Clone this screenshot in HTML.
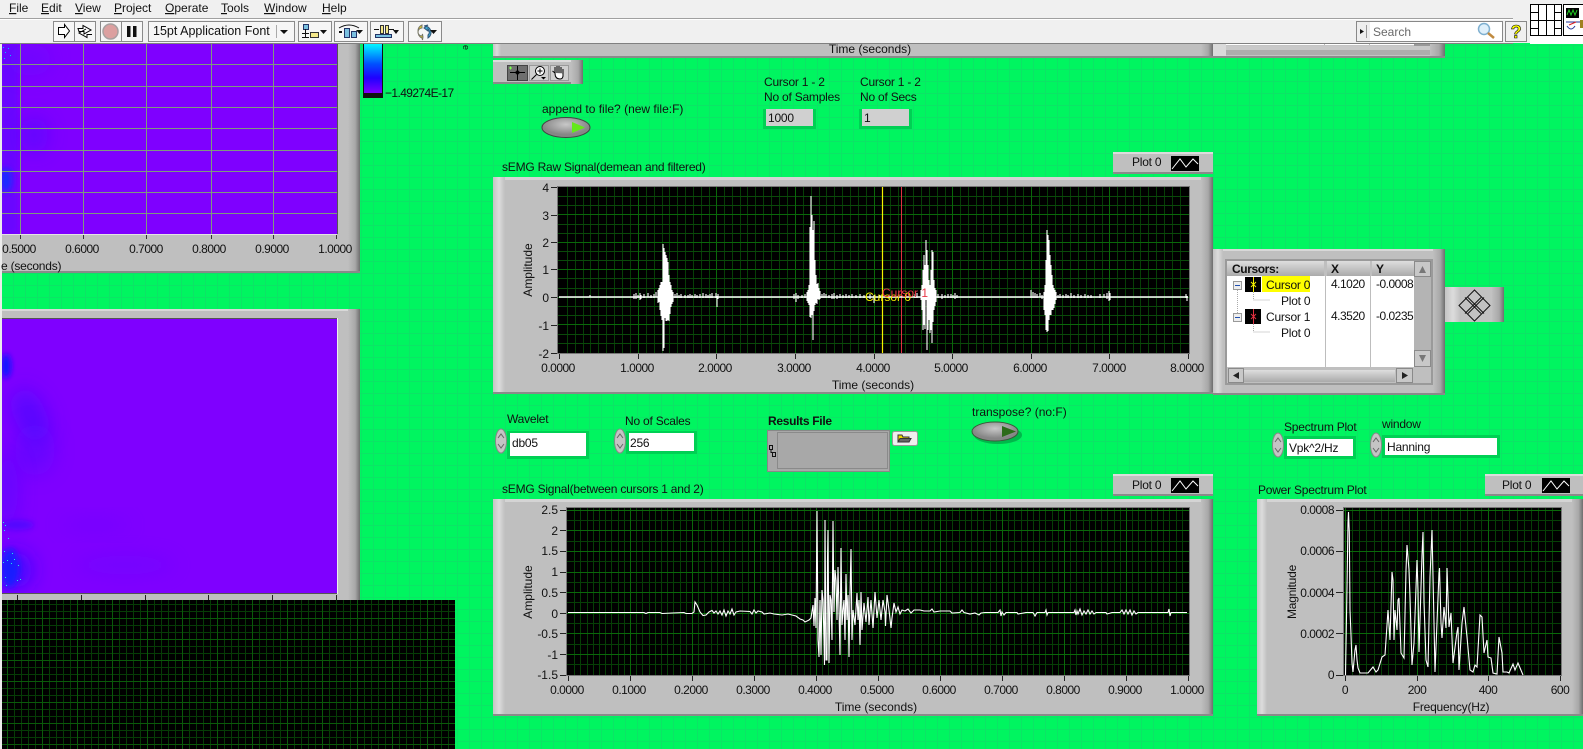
<!DOCTYPE html>
<html><head><meta charset="utf-8"><style>
html,body{margin:0;padding:0;width:1583px;height:749px;overflow:hidden;background:#00f560}
svg{display:block;font-family:"Liberation Sans",sans-serif;font-size:12px;letter-spacing:-.22px;fill:#111}
.m{text-anchor:middle}.e{text-anchor:end}
.n{letter-spacing:-.5px}.z{letter-spacing:0}
</style></head><body>
<svg width="1583" height="749" viewBox="0 0 1583 749" xmlns="http://www.w3.org/2000/svg">
<defs>
<pattern id="g" width="12" height="12" patternUnits="userSpaceOnUse" x="1" y="9"><rect width="12" height="12" fill="#00f560"/><path d="M0 .5H12M.5 0V12" stroke="#0ce466" stroke-width="1"/></pattern>
<pattern id="p4" width="35" height="21" patternUnits="userSpaceOnUse" x="7" y="597"><path d="M7.500 0V21M14.500 0V21M21.500 0V21M28.500 0V21M0 7.500H35M0 14.500H35" stroke="#063c06"/><path d="M.5 0V21M0 .5H35" stroke="#0a5a0a"/></pattern>
<path id="d1" d="M8.500 187V353M16.500 187V353M24.500 187V353M31.500 187V353M39.500 187V353M47.500 187V353M55.500 187V353M63.500 187V353M71.500 187V353" stroke="#063f06"/>
<path id="d2" d="M6.500 508V675M12.500 508V675M19.500 508V675M25.500 508V675M31.500 508V675M37.500 508V675M43.500 508V675M50.500 508V675M56.500 508V675" stroke="#063f06"/>
<path id="d3" d="M7.500 508V675M14.500 508V675M21.500 508V675M29.500 508V675M36.500 508V675M43.500 508V675M50.500 508V675M57.500 508V675M64.500 508V675" stroke="#063f06"/>
<linearGradient id="L"><stop offset="0" stop-color="#c4c4c4"/><stop offset=".5" stop-color="#dcdcdc"/><stop offset="1" stop-color="#bfbfbf"/></linearGradient>
<linearGradient id="R"><stop offset="0" stop-color="#bfbfbf"/><stop offset=".6" stop-color="#a8a8a8"/><stop offset="1" stop-color="#6e6e6e"/></linearGradient>
<linearGradient id="V" x2="0" y2="1"><stop offset="0" stop-color="#dedede"/><stop offset="1" stop-color="#aaa"/></linearGradient>
<linearGradient id="bar" x2="0" y2="1"><stop offset="0" stop-color="#00ffff"/><stop offset=".42" stop-color="#0050ff"/><stop offset=".7" stop-color="#2000ff"/><stop offset="1" stop-color="#7f00ff"/></linearGradient>
<radialGradient id="btn1" cx=".5" cy=".35"><stop offset="0" stop-color="#c8c8c8"/><stop offset="1" stop-color="#868686"/></radialGradient>
<filter id="b3" x="-100%" y="-100%" width="300%" height="300%"><feGaussianBlur stdDeviation="3"/></filter>
<filter id="b8" x="-100%" y="-100%" width="300%" height="300%"><feGaussianBlur stdDeviation="10"/></filter>
<clipPath id="c1"><rect x="2" y="43" width="335" height="191"/></clipPath>
<clipPath id="c2"><rect x="2" y="319" width="335" height="274"/></clipPath>
</defs>

<rect width="1583" height="749" fill="url(#g)"/>
<rect x="0" y="43" width="2" height="706" fill="#ececec"/>

<!-- upper heatmap panel -->
<rect x="2" y="43" width="358" height="230" fill="#bfbfbf"/>
<rect x="348" y="43" width="12" height="230" fill="url(#R)"/>
<rect x="2" y="271" width="358" height="2" fill="#8a8a8a"/>
<rect x="2" y="43" width="335" height="191" fill="#7f00ff"/>
<g clip-path="url(#c1)">
<rect x="0" y="43" width="18" height="191" fill="#3a18ff" opacity=".3" filter="url(#b3)"/>
<ellipse cx="34" cy="135" rx="14" ry="18" fill="#3a10ff" opacity=".45" filter="url(#b8)"/>
<ellipse cx="6" cy="180" rx="6" ry="12" fill="#1030ff" opacity=".85" filter="url(#b3)"/>
<ellipse cx="30" cy="60" rx="22" ry="16" fill="#5a08ff" opacity=".4" filter="url(#b8)"/>
<path d="M3 47h1v1H3zM5 52h1v1H5zM8 48h1v1H8zM4 58h1v1H4zM10 55h1v1h-1z" fill="#00c0ff"/>
</g>
<path d="M2 64.500H337M2 86.500H337M2 107.500H337M2 128.500H337M2 150.500H337M2 171.500H337M2 192.500H337M2 213.500H337M20.500 43V234M83.500 43V234M146.500 43V234M211.500 43V234M273.500 43V234" stroke="#7e9a7e" stroke-width="1"/>
<rect x="337" y="43" width="1" height="191" fill="#555"/>
<rect x="2" y="234" width="335" height="1" fill="#e4e4e4"/>
<path d="M20.500 235V239M83.500 235V239M146.500 235V239M211.500 235V239M273.500 235V239M336.500 235V239" stroke="#333"/>
<g class="m n"><text x="19" y="253">0.5000</text><text x="82" y="253">0.6000</text><text x="146" y="253">0.7000</text><text x="209" y="253">0.8000</text><text x="272" y="253">0.9000</text><text x="335" y="253">1.0000</text></g>
<text x="1" y="270">e (seconds)</text>

<!-- color bar -->
<rect x="363" y="43" width="20" height="55" fill="#111"/>
<rect x="364" y="43" width="18" height="50" fill="url(#bar)"/>
<text x="385" y="97" class="n" style="letter-spacing:-.6px">−1.49274E-17</text>
<text transform="translate(463,45) rotate(90)" font-size="9">e</text>

<!-- lower heatmap panel -->
<rect x="2" y="309" width="358" height="291" fill="#bfbfbf"/>
<rect x="2" y="309" width="358" height="2" fill="#d8d8d8"/>
<rect x="348" y="309" width="12" height="291" fill="url(#R)"/>
<rect x="2" y="318" width="336" height="276" fill="#555"/>
<rect x="2" y="319" width="335" height="274" fill="#7f00ff"/>
<g clip-path="url(#c2)">
<ellipse cx="6" cy="366" rx="5" ry="12" fill="#1018ff" filter="url(#b3)"/>
<ellipse cx="30" cy="415" rx="16" ry="28" fill="#3a10ff" opacity=".55" filter="url(#b8)" transform="rotate(-25 30 415)"/>
<ellipse cx="35" cy="450" rx="20" ry="26" fill="#4a0cff" opacity=".4" filter="url(#b8)"/>
<ellipse cx="8" cy="490" rx="10" ry="40" fill="#3a10ff" opacity=".4" filter="url(#b8)"/>
<ellipse cx="14" cy="570" rx="18" ry="18" fill="#2210ff" opacity=".7" filter="url(#b8)"/>
<ellipse cx="10" cy="568" rx="9" ry="20" fill="#1020ff" opacity=".8" filter="url(#b3)"/>
<ellipse cx="18" cy="525" rx="16" ry="5" fill="#3a10ff" opacity=".6" filter="url(#b3)"/>
<ellipse cx="125" cy="565" rx="50" ry="10" fill="#5a08ff" opacity=".3" filter="url(#b8)"/>
<ellipse cx="95" cy="525" rx="36" ry="6" fill="#5a08ff" opacity=".3" filter="url(#b8)"/>
<path d="M3 522h1v1H3zM5 525h1v1H5zM4 530h1v1H4zM8 538h1v1H8zM4 551h1v1H4zM12 553h1v1h-1zM7 560h1v1H7zM14 559h1v1h-1zM3 562h1v1H3zM11 563h1v1h-1zM18 565h1v1h-1zM5 577h1v1H5zM17 580h1v1h-1zM6 585h1v1H6zM20 579h1v1h-1z" fill="#20e8e0"/>
</g>
<rect x="337" y="318" width="1" height="276" fill="#eee"/>
<path d="M17.500 595V600M81.500 595V600M145.500 595V600M208.500 595V600M272.500 595V600M336.500 595V600" stroke="#222"/>

<!-- bottom-left black plot -->
<rect x="2" y="600" width="453" height="149" fill="#000"/>
<rect x="2" y="600" width="453" height="149" fill="url(#p4)"/>

<!-- top panels -->
<rect x="493" y="43" width="720" height="15" fill="#bfbfbf"/>
<rect x="1201" y="43" width="12" height="15" fill="url(#R)"/>
<rect x="493" y="43" width="8" height="15" fill="url(#L)"/>
<rect x="493" y="56" width="720" height="2" fill="#8a8a8a"/>
<text class="m z" x="870" y="53">Time (seconds)</text>
<rect x="1213" y="43" width="232" height="15" fill="#c4c4c4"/>
<rect x="1213" y="43" width="13" height="15" fill="#dadada"/>
<rect x="1226" y="43" width="188" height="2" fill="#fff"/>
<path d="M1324.500 43V45M1369.500 43V45" stroke="#bbb"/>
<rect x="1414" y="43" width="17" height="3" fill="#999"/>
<rect x="1226" y="46" width="207" height="4" fill="#c9c9c9"/>
<rect x="1226" y="50" width="207" height="5" fill="#adadad"/>
<rect x="1430" y="43" width="15" height="15" fill="url(#R)"/>
<rect x="1213" y="56" width="232" height="2" fill="#8a8a8a"/>

<!-- palette -->
<rect x="493" y="60" width="90" height="24" fill="#bfbfbf"/>
<rect x="493" y="60" width="90" height="2" fill="#dcdcdc"/><rect x="493" y="82" width="90" height="2" fill="#8a8a8a"/>
<rect x="571" y="60" width="12" height="24" fill="url(#R)"/>
<rect x="507.500" y="65.500" width="20" height="15" fill="#6f6f6f" stroke="#444"/>
<path d="M510 72.500H525M517.500 66V80" stroke="#000"/><circle cx="517.500" cy="72.500" r="1.500" fill="none" stroke="#000"/><path d="M509 68h3M510.500 66.500v3" stroke="#7cff50"/>
<rect x="529.500" y="65.500" width="19" height="15" fill="#cfcfcf" stroke="#9a9a9a"/>
<circle cx="540" cy="71" r="4.500" fill="#fff" stroke="#000"/><path d="M536.500 74.500L531.500 79.500M537.500 71h5M540 68.500v5" stroke="#000"/><path d="M541 77h5l-2.500 2.500z" fill="#000"/>
<rect x="550.500" y="65.500" width="18" height="15" fill="#cfcfcf" stroke="#9a9a9a"/>
<path d="M555 73V67M557 73V66M559 73V66M561 73V67M563 74V69M555 73L552.500 71M555 73q0 6 5 6q3.500 0 3-5" fill="#fff" stroke="#000"/>

<!-- labels -->
<text x="542" y="113" class="z">append to file? (new file:F)</text>
<ellipse cx="566" cy="127.500" rx="24" ry="10" fill="url(#btn1)" stroke="#444"/>
<path d="M572 122L585 127.500L572 133Z" fill="#64e81a"/>
<text x="764" y="86">Cursor 1 - 2</text><text x="764" y="101">No of Samples</text>
<text x="860" y="86">Cursor 1 - 2</text><text x="860" y="101">No of Secs</text>
<rect x="763" y="109" width="53" height="20" fill="#00d054"/><rect x="766" y="109" width="47" height="17" fill="#d0d0d0"/><text x="768" y="122">1000</text>
<rect x="859" y="109" width="53" height="20" fill="#00d054"/><rect x="862" y="109" width="47" height="17" fill="#d0d0d0"/><text x="864" y="122">1</text>
<text x="502" y="171">sEMG Raw Signal(demean and filtered)</text>

<!-- legends -->
<g><rect x="1113" y="152" width="100" height="22" fill="#bfbfbf"/><rect x="1113" y="152" width="100" height="2" fill="#dcdcdc"/><rect x="1113" y="172" width="100" height="2" fill="#8a8a8a"/><rect x="1171" y="156" width="28" height="15" fill="#000"/><path d="M1172 169L1180 159L1186 167L1193 159L1198 164" fill="none" stroke="#fff"/><text x="1132" y="166">Plot 0</text></g>
<g><rect x="1113" y="474" width="100" height="22" fill="#bfbfbf"/><rect x="1113" y="474" width="100" height="2" fill="#dcdcdc"/><rect x="1113" y="494" width="100" height="2" fill="#8a8a8a"/><rect x="1171" y="478" width="28" height="15" fill="#000"/><path d="M1172 491L1180 481L1186 489L1193 481L1198 486" fill="none" stroke="#fff"/><text x="1132" y="489">Plot 0</text></g>
<g><rect x="1485" y="474" width="98" height="22" fill="#bfbfbf"/><rect x="1485" y="474" width="98" height="2" fill="#dcdcdc"/><rect x="1485" y="494" width="98" height="2" fill="#8a8a8a"/><rect x="1542" y="478" width="28" height="15" fill="#000"/><path d="M1543 491L1551 481L1557 489L1564 481L1569 486" fill="none" stroke="#fff"/><text x="1502" y="489">Plot 0</text></g>

<!-- RAW panel -->
<rect x="493" y="177" width="720" height="217" fill="#bfbfbf"/>
<rect x="493" y="177" width="720" height="3" fill="#d4d4d4"/>
<rect x="493" y="177" width="12" height="217" fill="url(#L)"/>
<rect x="1201" y="177" width="12" height="217" fill="url(#R)"/>
<rect x="493" y="392" width="720" height="2" fill="#8a8a8a"/>
<rect x="557" y="186" width="633" height="168" fill="#777"/>
<rect x="558" y="187" width="631" height="166" fill="#000"/>
<use href="#d1" x="559"/><use href="#d1" x="638"/><use href="#d1" x="716"/><use href="#d1" x="795"/><use href="#d1" x="874"/><use href="#d1" x="952"/><use href="#d1" x="1031"/><use href="#d1" x="1109"/>
<path d="M558 196.500H1189M558 205.500H1189M558 224.500H1189M558 233.500H1189M558 251.500H1189M558 260.500H1189M558 278.500H1189M558 288.500H1189M558 306.500H1189M558 315.500H1189M558 334.500H1189M558 343.500H1189" stroke="#0a4a0a"/>
<path d="M558 214.500H1189M558 242.500H1189M558 269.500H1189M558 297.500H1189M558 324.500H1189M638.500 187V353M716.500 187V353M795.500 187V353M874.500 187V353M952.500 187V353M1031.500 187V353M1109.500 187V353" stroke="#0a680a"/>
<path d="M882.500 187V353" stroke="#f4f000" stroke-width="1.200"/><path d="M901.500 187V353" stroke="#e03040"/>
<path d="M559 297H1188" stroke="#fff" stroke-width="1.400"/>
<path stroke="#fff" stroke-width="1.100" fill="none" d="M590 295v2M634 294v5M636 293v6M638 295v3M640 293v7M641 295v4M644 294v4M648 293v4M651 295v3M654 294v4M656 292v5M658 290v13M659 288v14M660 285v25M661 282v34M662 282v38M663 244v107M664 248v100M665 252v66M666 255v66M667 258v63M668 262v58M669 275v46M670 282v32M671 285v22M672 290v14M673 292v10M675 294v4M677 293v5M679 295v3M681 294v4M685 295v3M688 295v3M690 294v4M692 295v3M695 294v4M697 295v3M700 294v4M703 293v5M706 294v4M708 295v3M710 294v4M712 293v5M716 293v5M717 296v11M718 294v5M794 294v5M796 293v9M798 295v4M802 295v3M805 294v4M807 292v9M808 290v13M809 285v20M810 227v90M811 196v122M812 215v100M813 230v110M814 221v90M815 260v45M816 275v28M817 284v20M818 283v16M819 288v12M820 291v8M822 294v4M824 293v5M826 294v4M829 295v3M832 294v5M834 293v6M837 295v4M840 294v4M843 295v3M846 294v4M849 295v3M852 294v4M856 295v3M860 294v4M864 295v3M870 294v5M874 295v8M880 295v3M915 294v4M917 293v5M921 290v10M922 285v25M923 270v60M924 255v70M925 265v64M926 240v60M927 250v100M928 265v65M929 280v40M930 285v48M931 270v60M932 250v93M933 252v70M934 280v30M935 288v18M936 290v12M938 294v4M942 294v5M945 295v3M948 294v4M951 294v4M953 295v3M955 293v6M957 295v3M1031 290v8M1033 292v6M1035 293v5M1037 294v4M1040 293v4M1042 295v4M1044 292v18M1045 285v30M1046 260v70M1047 230v102M1048 235v96M1049 240v80M1050 255v60M1051 265v50M1052 275v35M1053 285v25M1054 288v20M1055 290v14M1056 292v8M1058 295v3M1060 294v4M1063 295v3M1066 294v4M1068 295v3M1071 293v5M1074 295v3M1078 294v4M1081 295v3M1085 294v4M1088 295v3M1091 295v3M1100 294v4M1104 294v3M1107 293v6M1109 291v10M1110 293v7M1186 294v4M1187 296v5"/>
<text x="865" y="301" class="z" style="fill:#f4f000">Cursor 0</text>
<text x="882" y="297" class="z" style="fill:#e83848">Cursor 1</text>
<path d="M551 187.500H557M551 215.500H557M551 242.500H557M551 269.500H557M551 297.500H557M551 325.500H557M551 353.500H557M559.500 354V359M638.500 354V359M716.500 354V359M795.500 354V359M874.500 354V359M952.500 354V359M1031.500 354V359M1109.500 354V359M1188.500 354V359" stroke="#222"/>
<g class="e z" font-size="12"><text x="549" y="192">4</text><text x="549" y="220">3</text><text x="549" y="247">2</text><text x="549" y="274">1</text><text x="549" y="302">0</text><text x="549" y="330">-1</text><text x="549" y="358">-2</text></g>
<g class="m n"><text x="558" y="372">0.0000</text><text x="637" y="372">1.0000</text><text x="715" y="372">2.0000</text><text x="794" y="372">3.0000</text><text x="873" y="372">4.0000</text><text x="951" y="372">5.0000</text><text x="1030" y="372">6.0000</text><text x="1109" y="372">7.0000</text><text x="1187" y="372">8.0000</text></g>
<text class="m z" x="873" y="389">Time (seconds)</text>
<text class="m z" transform="translate(532,270) rotate(-90)">Amplitude</text>

<!-- Cursor panel -->
<rect x="1213" y="249" width="232" height="146" fill="#bfbfbf"/>
<rect x="1213" y="249" width="232" height="2" fill="#d8d8d8"/>
<rect x="1213" y="249" width="10" height="146" fill="url(#L)"/>
<rect x="1433" y="249" width="12" height="146" fill="url(#R)"/>
<rect x="1213" y="393" width="232" height="2" fill="#8a8a8a"/>
<rect x="1225" y="259" width="208" height="126" fill="#9a9a9a"/>
<rect x="1227" y="261" width="204" height="122" fill="#bfbfbf"/>
<rect x="1227" y="261" width="97" height="15" fill="url(#V)"/><rect x="1327" y="261" width="43" height="15" fill="url(#V)"/><rect x="1372" y="261" width="42" height="15" fill="url(#V)"/>
<text x="1232" y="273" font-weight="bold" style="letter-spacing:-.4px">Cursors:</text><text x="1331" y="273" font-weight="bold">X</text><text x="1376" y="273" font-weight="bold">Y</text>
<rect x="1227" y="276" width="187" height="91" fill="#fff"/>
<path d="M1325.500 276V367M1370.500 276V367" stroke="#bdbdbd"/>
<rect x="1262" y="276" width="48" height="16" fill="#ff0"/>
<rect x="1245" y="277" width="16" height="15" fill="#000"/><path d="M1253.500 277V292" stroke="#f4f000"/><path d="M1251 282L1256 287M1256 282L1251 287" stroke="#f4f000"/>
<rect x="1245" y="309" width="16" height="15" fill="#000"/><path d="M1253.500 309V324" stroke="#e03040"/><path d="M1251 314L1256 319M1256 314L1251 319" stroke="#e03040"/>
<rect x="1233.500" y="281.500" width="8" height="8" fill="#eee" stroke="#999"/><path d="M1235 285.500H1240" stroke="#2050b0"/>
<rect x="1233.500" y="313.500" width="8" height="8" fill="#eee" stroke="#999"/><path d="M1235 317.500H1240" stroke="#2050b0"/>
<path d="M1237.500 290V313M1253.500 292V300H1270M1253.500 324V332H1270" stroke="#aaa" stroke-dasharray="1 1" fill="none"/>
<text x="1266" y="289">Cursor 0</text><text x="1281" y="305">Plot 0</text><text x="1266" y="321">Cursor 1</text><text x="1281" y="337">Plot 0</text>
<g class="n"><text x="1331" y="288">4.1020</text><text x="1376" y="288">-0.0008</text><text x="1331" y="320">4.3520</text><text x="1376" y="320">-0.0235</text></g>
<rect x="1414" y="261" width="17" height="106" fill="#b4b4b4"/>
<rect x="1414.500" y="261.500" width="16" height="15" fill="#c8c8c8" stroke="#8a8a8a"/><path d="M1419 273L1422.500 266L1426 273Z" fill="#777"/>
<rect x="1414.500" y="350.500" width="16" height="16" fill="#c8c8c8" stroke="#8a8a8a"/><path d="M1419 355L1422.500 362L1426 355Z" fill="#777"/>
<rect x="1227" y="367" width="187" height="16" fill="#bfbfbf"/>
<rect x="1244" y="370" width="151" height="12" fill="url(#V)"/>
<rect x="1228.500" y="368.500" width="15" height="14" fill="#c8c8c8" stroke="#8a8a8a"/><path d="M1239 372L1233 375.500L1239 379Z" fill="#222"/>
<rect x="1396.500" y="368.500" width="16" height="14" fill="#c8c8c8" stroke="#8a8a8a"/><path d="M1402 372L1408 375.500L1402 379Z" fill="#222"/>

<!-- diamond -->
<rect x="1445" y="287" width="59" height="35" fill="#c2c2c2"/>
<rect x="1445" y="287" width="16" height="35" fill="url(#L)"/>
<rect x="1492" y="287" width="12" height="35" fill="url(#R)"/>
<path d="M1474.500 290L1490 305.500L1474.500 321L1459 305.500ZM1465 297.500L1481 313.500M1468 297.500L1484 313.500M1484 297.500L1468 313.500M1481 297.500L1465 313.500" fill="none" stroke="#111"/>

<!-- controls row -->
<text x="507" y="423">Wavelet</text>
<ellipse cx="501" cy="441" rx="5.500" ry="12" fill="#c4c4c4" stroke="#888"/><path d="M498 438L501 434L504 438M498 444L501 448L504 444" fill="none" stroke="#666"/>
<rect x="507" y="431" width="82" height="28" fill="#00d054"/><rect x="510" y="433" width="76" height="23" fill="#fff"/><text x="512" y="447">db05</text>
<text x="625" y="425">No of Scales</text>
<ellipse cx="620" cy="441" rx="5.500" ry="12" fill="#c4c4c4" stroke="#888"/><path d="M617 438L620 434L623 438M617 444L620 448L623 444" fill="none" stroke="#666"/>
<rect x="626" y="431" width="71" height="23" fill="#00d054"/><rect x="629" y="433" width="65" height="18" fill="#fff"/><text x="630" y="447">256</text>
<text x="768" y="425" font-weight="bold" style="letter-spacing:-.3px">Results File</text>
<rect x="767.500" y="430.500" width="122" height="41" fill="#a8a8a8" stroke="#888"/>
<rect x="777.500" y="432.500" width="110" height="36" fill="#a8a8a8" stroke="#8a8a8a"/>
<path d="M769.500 445.500h3v4h-3zM772.500 452.500h3v4h-3zM771 449.500v3h3" fill="none" stroke="#111"/>
<rect x="892.500" y="431.500" width="25" height="14" rx="2" fill="#eee" stroke="#999"/>
<path d="M898 442V435H902L903 437H909V442Z" fill="#e8d800" stroke="#333"/><path d="M898 442L900 438.500H911L909 442Z" fill="#666" stroke="#333"/>
<text x="972" y="416" class="z">transpose? (no:F)</text>
<ellipse cx="998" cy="435" rx="24" ry="9" fill="#00b84a"/>
<ellipse cx="995" cy="431.500" rx="23" ry="9.500" fill="url(#btn1)" stroke="#3a5a3a"/>
<path d="M1002 426L1016 431.500L1002 437Z" fill="#2c6b1a"/>
<text x="1284" y="431">Spectrum Plot</text>
<ellipse cx="1278" cy="445" rx="5.500" ry="12" fill="#c4c4c4" stroke="#888"/><path d="M1275 442L1278 438L1281 442M1275 448L1278 452L1281 448" fill="none" stroke="#666"/>
<rect x="1284" y="436" width="72" height="23" fill="#00d054"/><rect x="1287" y="439" width="66" height="17" fill="#fff"/><text x="1289" y="452">Vpk^2/Hz</text>
<text x="1382" y="428">window</text>
<ellipse cx="1376" cy="445" rx="5.500" ry="12" fill="#c4c4c4" stroke="#888"/><path d="M1373 442L1376 438L1379 442M1373 448L1376 452L1379 448" fill="none" stroke="#666"/>
<rect x="1382" y="435" width="118" height="23" fill="#00d054"/><rect x="1385" y="438" width="112" height="17" fill="#fff"/><text x="1387" y="451">Hanning</text>
<text x="502" y="493">sEMG Signal(between cursors 1 and 2)</text>
<text x="1258" y="494">Power Spectrum Plot</text>

<!-- signal panel -->
<rect x="493" y="499" width="720" height="217" fill="#bfbfbf"/>
<rect x="493" y="499" width="720" height="3" fill="#d4d4d4"/>
<rect x="493" y="499" width="12" height="217" fill="url(#L)"/>
<rect x="1201" y="499" width="12" height="217" fill="url(#R)"/>
<rect x="493" y="714" width="720" height="2" fill="#8a8a8a"/>
<rect x="566" y="507" width="624" height="169" fill="#777"/>
<rect x="567" y="508" width="622" height="167" fill="#000"/>
<use href="#d2" x="568"/><use href="#d2" x="630"/><use href="#d2" x="692"/><use href="#d2" x="754"/><use href="#d2" x="816"/><use href="#d2" x="878"/><use href="#d2" x="940"/><use href="#d2" x="1002"/><use href="#d2" x="1064"/><use href="#d2" x="1126"/>
<path d="M567 520.500H1189M567 541.500H1189M567 561.500H1189M567 582.500H1189M567 602.500H1189M567 623.500H1189M567 644.500H1189M567 664.500H1189" stroke="#063f06"/>
<path d="M567 510.500H1189M567 530.500H1189M567 551.500H1189M567 572.500H1189M567 592.500H1189M567 613.500H1189M567 633.500H1189M567 654.500H1189M630.500 508V675M692.500 508V675M754.500 508V675M816.500 508V675M878.500 508V675M940.500 508V675M1002.500 508V675M1064.500 508V675M1126.500 508V675" stroke="#0a680a"/>
<polyline fill="none" stroke="#fff" stroke-width="1.100" points="568,612.500 644,612.500 646,613.500 648,612.500 660,612.500 662,613.500 672,613 684,612.500 686,613.500 692,613.500 694,612 695,602 697,605 700,612 703,615.500 706,615 709,612 712,610.500 714,613 716,611 718,614 720,611 722,615 724,610 726,616 728,611 730,614 732,609 734,615 736,612 740,611 750,611.500 752,614 754,610 756,613 758,611 762,612 764,614 770,613 774,614 782,615 788,614 792,615 796,616 800,619 803,620 805,622 807,621 809,620 811,618 813,605 814,626 815,598 816,628 816.500,570 817,511 818,640 819,657 820,600 821,655 822,590 823,600 824,640 824.500,665 825,520 826,660 827,660 827.500,560 828,530 829,663 830,595 831,600 832,640 833,521 834,612 835,570 836,580 837,620 838,567 839,610 840,655 841,548 842,625 843,610 844,600 845,640 846,574 847,620 848,595 849,657 850,594 851,549 852,640 853,610 855,625 857,593 858,620 859,600 860,645 861,592 862,630 864,603 866,622 868,597 869,625 871,600 873,628 875,592 877,618 879,600 881,620 883,600 885,612 885.500,626 887,595 889,610 891,628 892,618 894,603 896,612 898,607 900,614 902,610 905,611 908,609 911,613 914,610 920,610 924,611 930,611 932,609 934,612 940,611 950,611 952,613 960,612.500 962,610 964,612.500 970,614 975,613 979,615 981,613 985,612.500 998,612.500 1000,610 1001,616 1002,612 1004,615 1006,612.500 1017,612.500 1018,614 1026,612.500 1033,612.500 1035,616 1037,612.500 1045,612.500 1046,610 1047,615 1048,612.500 1074,612.500 1075,610 1076,615 1077,611 1078,614 1080,609 1082,615 1084,611 1086,614 1088,610 1090,614 1092,611 1094,614 1096,612.500 1106,612.500 1107,614 1112,612.500 1120,612.500 1122,610 1124,614 1126,610 1128,614 1130,610 1132,615 1134,611 1136,614 1138,612.500 1168,612.500 1169,609 1170,616 1171,612.500 1187,612.500"/>
<path d="M560 510.500H566M560 530.500H566M560 551.500H566M560 572.500H566M560 592.500H566M560 613.500H566M560 633.500H566M560 654.500H566M560 675.500H566M568.500 676V681M630.500 676V681M692.500 676V681M754.500 676V681M816.500 676V681M878.500 676V681M940.500 676V681M1002.500 676V681M1064.500 676V681M1126.500 676V681M1188.500 676V681" stroke="#222"/>
<g class="e z"><text x="558" y="514">2.5</text><text x="558" y="535">2</text><text x="558" y="555">1.5</text><text x="558" y="576">1</text><text x="558" y="597">0.5</text><text x="558" y="618">0</text><text x="558" y="638">-0.5</text><text x="558" y="659">-1</text><text x="558" y="679">-1.5</text></g>
<g class="m n"><text x="567" y="694">0.0000</text><text x="629" y="694">0.1000</text><text x="691" y="694">0.2000</text><text x="753" y="694">0.3000</text><text x="815" y="694">0.4000</text><text x="877" y="694">0.5000</text><text x="939" y="694">0.6000</text><text x="1001" y="694">0.7000</text><text x="1063" y="694">0.8000</text><text x="1125" y="694">0.9000</text><text x="1187" y="694">1.0000</text></g>
<text class="m z" x="876" y="711">Time (seconds)</text>
<text class="m z" transform="translate(532,592) rotate(-90)">Amplitude</text>

<!-- spectrum panel -->
<rect x="1257" y="499" width="326" height="217" fill="#bfbfbf"/>
<rect x="1257" y="499" width="326" height="3" fill="#d4d4d4"/>
<rect x="1257" y="499" width="10" height="217" fill="url(#L)"/>
<rect x="1572" y="499" width="11" height="217" fill="url(#R)"/>
<rect x="1257" y="714" width="326" height="2" fill="#8a8a8a"/>
<rect x="1343" y="507" width="219" height="169" fill="#777"/>
<rect x="1344" y="508" width="217" height="167" fill="#000"/>
<use href="#d3" x="1345"/><use href="#d3" x="1417"/><use href="#d3" x="1488"/>
<path d="M1344 520.500H1561M1344 530.500H1561M1344 541.500H1561M1344 561.500H1561M1344 571.500H1561M1344 582.500H1561M1344 602.500H1561M1344 612.500H1561M1344 623.500H1561M1344 643.500H1561M1344 654.500H1561M1344 664.500H1561" stroke="#063f06"/>
<path d="M1344 510.500H1561M1344 551.500H1561M1344 592.500H1561M1344 633.500H1561M1345.500 508V675M1417.500 508V675M1488.500 508V675" stroke="#0a680a"/>
<polyline fill="none" stroke="#fff" stroke-width="1.100" points="1345.500,675 1347,587 1348,523 1348.500,512 1349.300,532 1350,610 1351,635 1352,663 1353,672 1355,650 1356,645 1357,660 1358,668 1360,673 1368,673 1373,667 1376,672 1378,670 1382,657 1385,655 1387,625 1388,610 1390,640 1392,572 1393,580 1394,640 1395,610 1397,630 1398,600 1399,598 1401,653 1404,658 1406,570 1407,545 1409,570 1410,597 1412,665 1414,643 1417,560 1418,590 1419,652 1422,555 1423,532 1424,602 1426,660 1428,667 1430,577 1432,530 1434,623 1435,672 1439,573 1439.500,568 1441,623 1442,638 1444,607 1446,628 1447,568 1449,627 1451,613 1453,663 1457,632 1458,627 1459,670 1462,623 1464,607 1467,637 1470,670 1473,672 1475,665 1477,667 1480,615 1482,617 1484,653 1487,640 1488,657 1491,658 1493,673 1497,674 1499,637 1502,653 1503,672 1507,672 1509,673 1513,664 1515,670 1518,663 1523,675"/>
<path d="M1336 510.500H1343M1336 551.500H1343M1336 592.500H1343M1336 633.500H1343M1336 675.500H1343M1345.500 676V681M1417.500 676V681M1488.500 676V681M1560.500 676V681" stroke="#222"/>
<g class="e n"><text x="1334" y="514">0.0008</text><text x="1334" y="555">0.0006</text><text x="1334" y="597">0.0004</text><text x="1334" y="638">0.0002</text><text x="1334" y="679">0</text></g>
<g class="m n"><text x="1345" y="694">0</text><text x="1417" y="694">200</text><text x="1488" y="694">400</text><text x="1560" y="694">600</text></g>
<text class="m" x="1451" y="711">Frequency(Hz)</text>
<text class="m" transform="translate(1296,592) rotate(-90)">Magnitude</text>

<!-- menu + toolbar -->
<rect x="0" y="0" width="1583" height="43" fill="#f0f0f0"/>
<rect x="0" y="18" width="1513" height="1" fill="#a0a0a0"/>
<rect x="0" y="19" width="1513" height="1" fill="#fff"/>
<rect x="0" y="43" width="1513" height="1" fill="#808080"/>
<g class="z" style="fill:#111"><text x="9" y="12"><tspan text-decoration="underline">F</tspan>ile</text><text x="41" y="12"><tspan text-decoration="underline">E</tspan>dit</text><text x="75" y="12"><tspan text-decoration="underline">V</tspan>iew</text><text x="114" y="12"><tspan text-decoration="underline">P</tspan>roject</text><text x="165" y="12"><tspan text-decoration="underline">O</tspan>perate</text><text x="221" y="12"><tspan text-decoration="underline">T</tspan>ools</text><text x="264" y="12"><tspan text-decoration="underline">W</tspan>indow</text><text x="322" y="12"><tspan text-decoration="underline">H</tspan>elp</text></g>
<g fill="#f6f6f6" stroke="#8a8a8a"><rect x="53.500" y="21.500" width="21" height="20"/><rect x="74.500" y="21.500" width="21" height="20"/><rect x="100.500" y="21.500" width="21" height="20"/><rect x="121.500" y="21.500" width="21" height="20"/><rect x="148.500" y="21.500" width="146" height="20"/><rect x="298.500" y="21.500" width="33" height="20"/><rect x="334.500" y="21.500" width="33" height="20"/><rect x="370.500" y="21.500" width="33" height="20"/><rect x="408.500" y="21.500" width="33" height="20"/></g>
<path d="M58.500 27.500H64.500V24.500L69.500 31L64.500 37.500V34.500H58.500Z" fill="#fff" stroke="#000"/>
<path d="M78 28.500H83V25.500L91 30L84 34V31.500H79ZM92 34.500H87V37.500L79 33L86 29" fill="#fff" stroke="#000"/>
<circle cx="110.500" cy="31.500" r="7.500" fill="#dca0a0" stroke="#a8a0a0" stroke-width="1.500"/>
<rect x="127" y="26" width="3.500" height="11" fill="#111"/><rect x="133" y="26" width="3.500" height="11" fill="#111"/>
<text x="153" y="35" class="z" font-size="12.500">15pt Application Font</text>
<path d="M276.500 25V38" stroke="#aaa"/><path d="M280 30H288L284 34Z" fill="#111"/>
<rect x="303.500" y="24.500" width="5" height="5" fill="#7ac0e0" stroke="#236"/><rect x="310.500" y="32.500" width="8" height="5" fill="#f5e88a" stroke="#333"/><path d="M305.500 29V38M302 33.500H309M302 37.500H309" stroke="#111"/><path d="M320 30H327L323.500 34Z" fill="#111"/>
<path d="M339 28q10-6 20 0" fill="none" stroke="#111"/><rect x="339" y="31" width="3" height="2" fill="#111"/><rect x="344.500" y="28.500" width="5" height="9" fill="#7ac0e0" stroke="#236"/><rect x="351.500" y="31.500" width="5" height="6" fill="#7ac0e0" stroke="#236"/><path d="M356 30H363L359.500 34Z" fill="#111"/>
<rect x="375.500" y="34.500" width="16" height="3" fill="#7ac0e0" stroke="#236"/><rect x="380.500" y="25.500" width="3" height="8" fill="#f5e88a" stroke="#333"/><rect x="385.500" y="25.500" width="3" height="8" fill="#f5e88a" stroke="#333"/><path d="M374 29.500H379M389 29.500H394" stroke="#111"/><path d="M393 30H399L396 34Z" fill="#111"/>
<path d="M418 31a6.500 6.500 0 0 0 4 7l.5 2 .5-3-.5-3-.5 2a4 4 0 0 1 0-8V25a6.500 6.500 0 0 0-4 6z" fill="#e8d020" stroke="#776"/><path d="M424 26a6.500 6.500 0 0 1 4 12v-3a4 4 0 0 0 0-6v2l-4-3 4-3z" fill="#3aa8d0" stroke="#357"/><path d="M430 30H437L433.500 34Z" fill="#111"/>

<!-- search -->
<rect x="1356.500" y="21.500" width="146" height="20" fill="#fff" stroke="#888"/><rect x="1357" y="22" width="13" height="19" fill="#eee"/><path d="M1360 29L1364 31.500L1360 34Z" fill="#111"/><path d="M1366.500 25V38" stroke="#999"/>
<text x="1373" y="36" class="z" style="fill:#6a6a6a">Search</text>
<circle cx="1484" cy="29" r="5.500" fill="#dff0fb" stroke="#7fb0d0" stroke-width="1.500"/><path d="M1488 33L1494 38" stroke="#c08a40" stroke-width="2.500"/>
<rect x="1505.500" y="21.500" width="21" height="20" fill="#f0f0f0" stroke="#888"/>
<text x="1516" y="38" class="m" font-size="18" font-weight="bold" stroke="#000" stroke-width=".6" style="fill:#ff0">?</text>
<rect x="1530" y="36" width="53" height="8" fill="#fff"/>
<rect x="1530.500" y="4.500" width="31" height="31" fill="#fff" stroke="#000" stroke-width="1"/>
<path d="M1538.500 5V35M1546.500 5V35M1554.500 5V35M1531 12.500H1538M1531 20.500H1561M1531 28.500H1538M1554 12.500H1561M1554 28.500H1561" stroke="#000" fill="none"/>
<rect x="1563.500" y="4.500" width="20" height="31" fill="#fff" stroke="#000"/>
<rect x="1566" y="8" width="13" height="10" fill="#000"/><path d="M1567 15L1569 10L1571 15L1573 10L1575 15L1577 10" fill="none" stroke="#2c2"/>
<path d="M1566 22H1583M1567 26q4 6 8 0" fill="none" stroke="#239"/><path d="M1569 25L1576 22" stroke="#d22"/><rect x="1580" y="20" width="3" height="8" fill="#a08020"/>
</svg>
</body></html>
